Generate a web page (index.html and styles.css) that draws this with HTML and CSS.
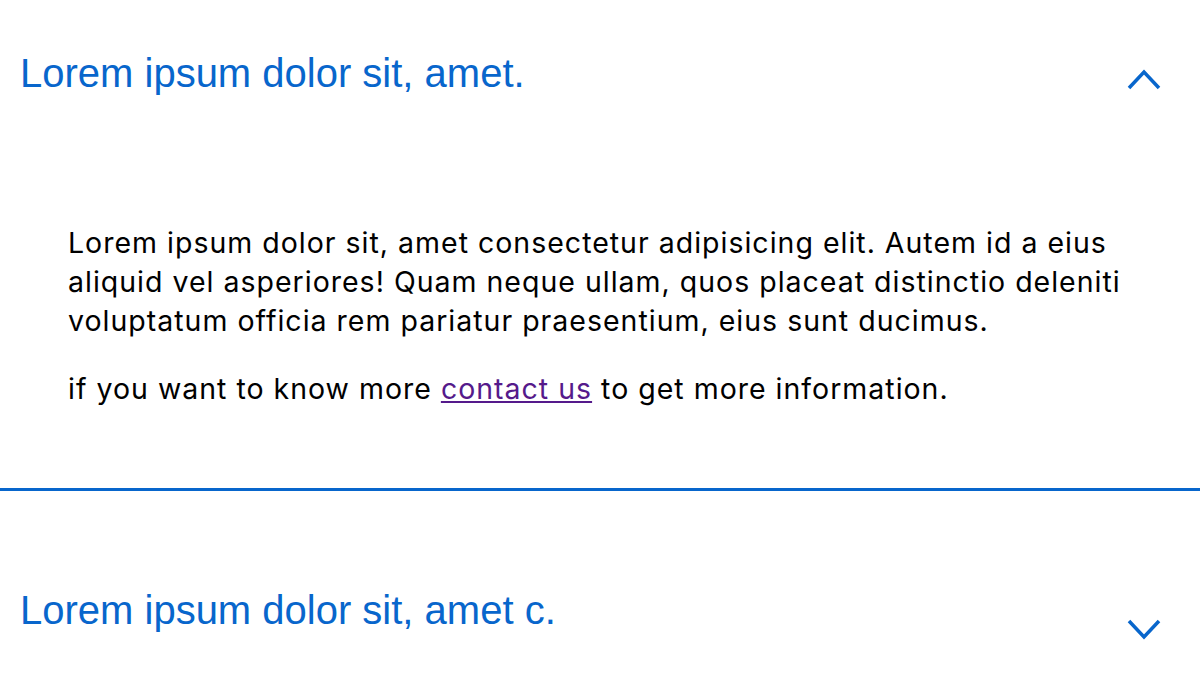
FILE: index.html
```html
<!DOCTYPE html>
<html lang="en">
<head>
<meta charset="utf-8">
<title>Accordion</title>
<link rel="stylesheet" href="styles.css">
</head>
<body>
<div class="accordion">
  <section class="item item--open">
    <div class="item-header">
      <h2 class="item-title">Lorem ipsum dolor sit, amet.</h2>
      <svg class="chevron chevron--up" width="36" height="24" viewBox="0 0 36 24" aria-hidden="true"><polyline points="3,21 18,5 33,21" fill="none" stroke="#0866cc" stroke-width="3.5"/></svg>
    </div>
    <div class="item-panel">
      <p class="panel-text">Lorem ipsum dolor sit, amet consectetur adipisicing elit. Autem id a eius aliquid vel asperiores! Quam neque ullam, quos placeat distinctio deleniti voluptatum officia rem pariatur praesentium, eius sunt ducimus.</p>
      <p class="panel-text">if you want to know more <a class="panel-link" href="#contact">contact us</a> to get more information.</p>
    </div>
  </section>
  <section class="item">
    <div class="item-header item-header--closed">
      <h2 class="item-title">Lorem ipsum dolor sit, amet c.</h2>
      <svg class="chevron chevron--down" width="36" height="24" viewBox="0 0 36 24" aria-hidden="true"><polyline points="3,3 18,19 33,3" fill="none" stroke="#0866cc" stroke-width="3.5"/></svg>
    </div>
  </section>
</div>
</body>
</html>
```
FILE: styles.css
```css
html, body {
  margin: 0;
  padding: 0;
  background: #ffffff;
}

body {
  width: 1200px;
  height: 680px;
  overflow: hidden;
}

.accordion {
  display: flex;
  flex-direction: column;
}

.item--open {
  border-bottom: 3px solid #0866cc;
}

.item-header {
  display: flex;
  justify-content: space-between;
  align-items: flex-start;
  padding: 50px 38px 0 20px;
}

.item-header--closed {
  padding-top: 96px;
}

.item-title {
  margin: 0;
  font-family: "Liberation Sans", Arial, sans-serif;
  font-weight: 400;
  font-size: 40px;
  line-height: 46px;
  color: #0866cc;
}

.chevron {
  display: block;
  flex: none;
}

.chevron--up {
  margin-top: 17px;
}

.chevron--down {
  margin-top: 31px;
}

.item-panel {
  padding: 127px 40px 80px 68px;
}

.panel-text {
  margin: 0 0 29px;
  font-family: Inter, "Noto Sans", sans-serif;
  font-size: 28.5px;
  line-height: 39px;
  letter-spacing: 1px;
  color: #000000;
}

.panel-text:last-child {
  margin-bottom: 0;
}

.panel-link {
  color: #551a8b;
  text-decoration: underline;
}
```
